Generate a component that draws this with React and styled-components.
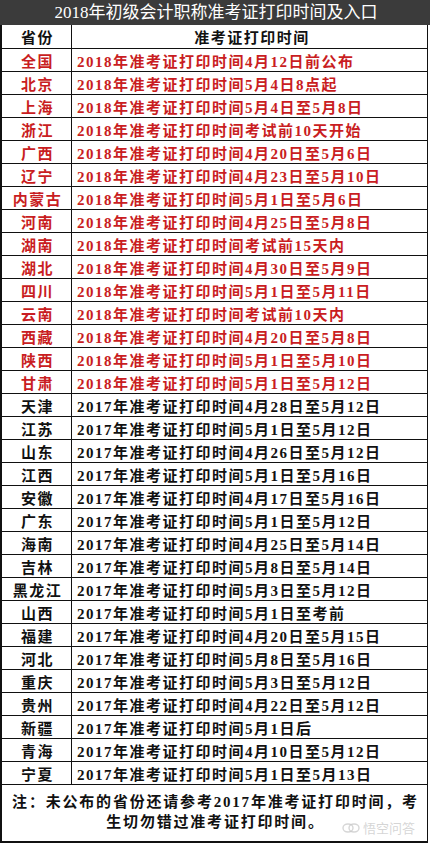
import React from "react";
import styled, { createGlobalStyle } from "styled-components";

const rows = [
  ["全国", "2018年准考证打印时间4月12日前公布", true],
  ["北京", "2018年准考证打印时间5月4日8点起", true],
  ["上海", "2018年准考证打印时间5月4日至5月8日", true],
  ["浙江", "2018年准考证打印时间考试前10天开始", true],
  ["广西", "2018年准考证打印时间4月20日至5月6日", true],
  ["辽宁", "2018年准考证打印时间4月23日至5月10日", true],
  ["内蒙古", "2018年准考证打印时间5月1日至5月6日", true],
  ["河南", "2018年准考证打印时间4月25日至5月8日", true],
  ["湖南", "2018年准考证打印时间考试前15天内", true],
  ["湖北", "2018年准考证打印时间4月30日至5月9日", true],
  ["四川", "2018年准考证打印时间5月1日至5月11日", true],
  ["云南", "2018年准考证打印时间考试前10天内", true],
  ["西藏", "2018年准考证打印时间4月20日至5月8日", true],
  ["陕西", "2018年准考证打印时间5月1日至5月10日", true],
  ["甘肃", "2018年准考证打印时间5月1日至5月12日", true],
  ["天津", "2017年准考证打印时间4月28日至5月12日"],
  ["江苏", "2017年准考证打印时间5月1日至5月12日"],
  ["山东", "2017年准考证打印时间4月26日至5月12日"],
  ["江西", "2017年准考证打印时间5月1日至5月16日"],
  ["安徽", "2017年准考证打印时间4月17日至5月16日"],
  ["广东", "2017年准考证打印时间5月1日至5月12日"],
  ["海南", "2017年准考证打印时间4月25日至5月14日"],
  ["吉林", "2017年准考证打印时间5月8日至5月14日"],
  ["黑龙江", "2017年准考证打印时间5月3日至5月12日"],
  ["山西", "2017年准考证打印时间5月1日至考前"],
  ["福建", "2017年准考证打印时间4月20日至5月15日"],
  ["河北", "2017年准考证打印时间5月8日至5月16日"],
  ["重庆", "2017年准考证打印时间5月3日至5月12日"],
  ["贵州", "2017年准考证打印时间4月22日至5月12日"],
  ["新疆", "2017年准考证打印时间5月1日后"],
  ["青海", "2017年准考证打印时间4月10日至5月12日"],
  ["宁夏", "2017年准考证打印时间5月1日至5月13日"],
];

const GlobalStyle = createGlobalStyle`
  body {
    margin: 0;
    background: #fff;
    font-family: "Liberation Serif", "Noto Sans CJK SC", serif;
  }
`;

const Sheet = styled.div`
  width: 430px;
  padding-bottom: 3px;
`;

const TitleBar = styled.div`
  height: 25px;
  background: #3b3b3b;
  color: #fff;
  font-size: 17px;
  line-height: 25px;
  text-align: center;
  padding-left: 2px;
`;

const Table = styled.div`
  width: 428px;
  box-sizing: border-box;
  border-left: 2px solid #111;
  border-right: 1px solid #111;
  border-bottom: 2px solid #111;
`;

const Row = styled.div`
  display: grid;
  grid-template-columns: 70px 1fr;
  height: ${(p) => p.h || 23}px;
  box-sizing: border-box;
  border-bottom: 1px solid #111;
  color: ${(p) => (p.red ? "#c91d22" : "#111")};
  font-size: 15px;
  font-weight: bold;
  letter-spacing: 1.5px;
`;

const Province = styled.div`
  border-right: 1px solid #111;
  display: flex;
  align-items: center;
  justify-content: center;
  padding-left: 2px;
`;

const Time = styled.div`
  display: flex;
  align-items: center;
  justify-content: ${(p) => (p.center ? "center" : "flex-start")};
  padding-left: 5px;
  white-space: nowrap;
`;

const Footer = styled.div`
  position: relative;
  height: 56px;
  box-sizing: border-box;
  padding: 7px 2px 0 4px;
  font-size: 15px;
  font-weight: bold;
  letter-spacing: 1.8px;
  line-height: 20px;
  text-align: center;
  color: #111;
`;

const Note = styled.span``;

const Watermark = styled.div`
  position: absolute;
  right: 12px;
  bottom: 3px;
  display: flex;
  align-items: center;
  gap: 3px;
  color: rgba(200, 200, 200, 0.75);
  font-family: "Noto Sans CJK SC", sans-serif;
  font-weight: normal;
  font-size: 13px;
  letter-spacing: 0;
  pointer-events: none;
`;

export default function App() {
  return (
    <Sheet>
      <GlobalStyle />
      <TitleBar>2018年初级会计职称准考证打印时间及入口</TitleBar>
      <Table>
        <Row h={24}>
          <Province>省份</Province>
          <Time center>准考证打印时间</Time>
        </Row>
        {rows.map(([p, t, red]) => (
          <Row key={p} red={red}>
            <Province>{p}</Province>
            <Time>{t}</Time>
          </Row>
        ))}
        <Footer>
          <Note>注：未公布的省份还请参考2017年准考证打印时间，考生切勿错过准考证打印时间。</Note>
          <Watermark>
            <svg width="18" height="12" viewBox="0 0 18 12">
              <ellipse cx="6" cy="6" rx="5" ry="4" fill="none" stroke="currentColor" strokeWidth="1.4" />
              <ellipse cx="12" cy="6" rx="5" ry="4" fill="none" stroke="currentColor" strokeWidth="1.4" />
            </svg>
            悟空问答
          </Watermark>
        </Footer>
      </Table>
    </Sheet>
  );
}
